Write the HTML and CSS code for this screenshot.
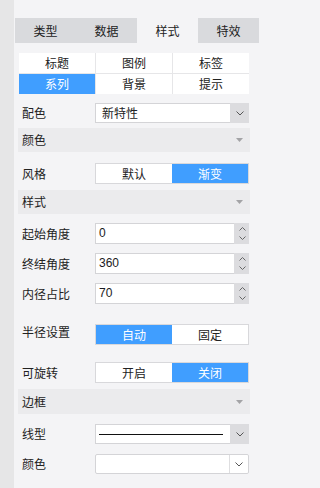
FILE: index.html
```html
<!DOCTYPE html>
<html lang="zh">
<head>
<meta charset="utf-8">
<title>样式</title>
<link rel="stylesheet" href="styles.css">
</head>
<body>
<div class="app">
  <div class="strip"></div>
  <div class="main">
    <div class="tabs">
      <div class="tab">类型</div>
      <div class="tab">数据</div>
      <div class="tab active">样式</div>
      <div class="tab">特效</div>
    </div>
    <div class="subtabs">
      <div class="subtab">标题</div>
      <div class="subtab">图例</div>
      <div class="subtab">标签</div>
      <div class="subtab on">系列</div>
      <div class="subtab">背景</div>
      <div class="subtab">提示</div>
    </div>
    <div class="form">
      <div class="row mt9">
        <div class="label">配色</div>
        <div class="ctrl select">
          <span class="val">新特性</span>
          <span class="btn"><svg width="8" height="5" viewBox="0 0 8 5"><polyline points="0.5,0.5 4,4 7.5,0.5" fill="none" stroke="#555" stroke-width="1"/></svg></span>
        </div>
      </div>
      <div class="header mt5"><span>颜色</span><svg class="tri" width="7" height="4" viewBox="0 0 7 4"><polygon points="0,0 7,0 3.5,4" fill="#a3a3a6"/></svg></div>
      <div class="row mt11">
        <div class="label">风格</div>
        <div class="ctrl toggle"><span>默认</span><span class="on">渐变</span></div>
      </div>
      <div class="header mt6"><span>样式</span><svg class="tri" width="7" height="4" viewBox="0 0 7 4"><polygon points="0,0 7,0 3.5,4" fill="#a3a3a6"/></svg></div>
      <div class="row mt9">
        <div class="label">起始角度</div>
        <div class="ctrl num"><span class="v">0</span><span class="spin"><svg width="7" height="4" viewBox="0 0 7 4"><polyline points="0.5,3.5 3.5,0.5 6.5,3.5" fill="none" stroke="#666" stroke-width="1"/></svg><svg width="7" height="4" viewBox="0 0 7 4"><polyline points="0.5,0.5 3.5,3.5 6.5,0.5" fill="none" stroke="#666" stroke-width="1"/></svg></span></div>
      </div>
      <div class="row mt9">
        <div class="label">终结角度</div>
        <div class="ctrl num"><span class="v">360</span><span class="spin"><svg width="7" height="4" viewBox="0 0 7 4"><polyline points="0.5,3.5 3.5,0.5 6.5,3.5" fill="none" stroke="#666" stroke-width="1"/></svg><svg width="7" height="4" viewBox="0 0 7 4"><polyline points="0.5,0.5 3.5,3.5 6.5,0.5" fill="none" stroke="#666" stroke-width="1"/></svg></span></div>
      </div>
      <div class="row mt9">
        <div class="label">内径占比</div>
        <div class="ctrl num"><span class="v">70</span><span class="spin"><svg width="7" height="4" viewBox="0 0 7 4"><polyline points="0.5,3.5 3.5,0.5 6.5,3.5" fill="none" stroke="#666" stroke-width="1"/></svg><svg width="7" height="4" viewBox="0 0 7 4"><polyline points="0.5,0.5 3.5,3.5 6.5,0.5" fill="none" stroke="#666" stroke-width="1"/></svg></span></div>
      </div>
      <div class="row mt20">
        <div class="label raised">半径设置</div>
        <div class="ctrl toggle"><span class="on">自动</span><span>固定</span></div>
      </div>
      <div class="row mt17">
        <div class="label">可旋转</div>
        <div class="ctrl toggle"><span>开启</span><span class="on">关闭</span></div>
      </div>
      <div class="header tall mt6"><span>边框</span><svg class="tri" width="7" height="4" viewBox="0 0 7 4"><polygon points="0,0 7,0 3.5,4" fill="#a3a3a6"/></svg></div>
      <div class="row mt10">
        <div class="label">线型</div>
        <div class="ctrl select">
          <span class="val line"><i class="stroke"></i></span>
          <span class="btn"><svg width="8" height="5" viewBox="0 0 8 5"><polyline points="0.5,0.5 4,4 7.5,0.5" fill="none" stroke="#555" stroke-width="1"/></svg></span>
        </div>
      </div>
      <div class="row mt10">
        <div class="label">颜色</div>
        <div class="ctrl select plain">
          <span class="val"></span>
          <span class="btn"><svg width="8" height="5" viewBox="0 0 8 5"><polyline points="0.5,0.5 4,4 7.5,0.5" fill="none" stroke="#555" stroke-width="1"/></svg></span>
        </div>
      </div>
    </div>
  </div>
</div>
</body>
</html>
```
FILE: styles.css
```css
html, body {
  margin: 0;
  padding: 0;
}
body {
  background: #f4f4f6;
  font-family: "Noto Sans CJK SC", "Noto Sans", sans-serif;
  font-size: 12px;
  color: #222;
}
.app {
  display: flex;
  width: 260px;
  height: 488px;
  overflow: hidden;
}
.strip {
  width: 14px;
  flex: none;
  background: #e6e6e7;
}
.main {
  width: 246px;
  flex: none;
  padding-top: 18px;
}
.tabs {
  display: grid;
  grid-template-columns: repeat(4, 61px);
  height: 25px;
  margin: 0 1px;
}
.tab {
  display: flex;
  align-items: center;
  justify-content: center;
  background: #d9dadd;
  line-height: 16px;
}
.tab.active {
  background: transparent;
}
.subtabs {
  display: grid;
  grid-template-columns: repeat(3, 76px);
  gap: 1px;
  width: 230px;
  margin: 10px 0 0 5px;
  background: #e6e6e8;
}
.subtab {
  height: 20px;
  display: flex;
  align-items: center;
  justify-content: center;
  background: #fff;
  line-height: 16px;
}
.subtab.on {
  background: #409eff;
  color: #fff;
}
.form {
  width: 232px;
  margin: 0 0 0 4px;
}
.row {
  display: flex;
  align-items: center;
}
.label {
  width: 73px;
  padding-left: 4px;
  flex: none;
  line-height: 16px;
}
.label.raised {
  padding-bottom: 5px;
}
.ctrl {
  width: 154px;
  box-sizing: border-box;
  flex: none;
}
.header {
  height: 24px;
  background: #ebebed;
  display: flex;
  align-items: center;
  justify-content: space-between;
  padding: 0 7px 0 4px;
  line-height: 16px;
}
.header.tall {
  height: 25px;
}
.tri {
  display: block;
}
.select {
  height: 20px;
  border: 1px solid #d4d4d7;
  background: #fff;
  display: flex;
}
.select .val {
  flex: 1;
  padding-left: 6px;
  line-height: 18px;
}
.select .btn {
  width: 19px;
  margin: -1px -1px -1px 0;
  background: #dcdcdf;
  display: flex;
  align-items: center;
  justify-content: center;
}
.select .line {
  display: flex;
  align-items: center;
  padding-left: 3px;
  padding-right: 7px;
}
.stroke {
  display: block;
  flex: 1;
  height: 1px;
  background: #111;
}
.select.plain {
  border-radius: 2px;
}
.select.plain .btn {
  margin: 0;
  width: 18px;
  background: #fff;
  border-left: 1px solid #dedee0;
  border-radius: 0 2px 2px 0;
}
.num {
  height: 21px;
  border: 1px solid #d4d4d7;
  background: #fff;
  display: flex;
}
.num .v {
  flex: 1;
  padding-left: 3px;
  font-family: "Liberation Sans", Arial, sans-serif;
  font-size: 12px;
  line-height: 19px;
  color: #1a1a22;
}
.spin {
  width: 13px;
  margin: -1px -1px -1px 0;
  background: #dcdcdf;
  display: flex;
  flex-direction: column;
  align-items: center;
  justify-content: space-evenly;
  padding-left: 2px;
}
.spin svg {
  display: block;
}
.toggle {
  height: 21px;
  border: 1px solid #d8d8db;
  background: #fff;
  display: flex;
}
.toggle span {
  flex: 1;
  display: flex;
  align-items: center;
  justify-content: center;
  line-height: 16px;
}
.toggle span.on {
  background: #409eff;
  color: #fff;
}
.mt5 { margin-top: 5px; }
.mt6 { margin-top: 6px; }
.mt9 { margin-top: 9px; }
.mt10 { margin-top: 10px; }
.mt11 { margin-top: 11px; }
.mt17 { margin-top: 17px; }
.mt20 { margin-top: 20px; }
```
